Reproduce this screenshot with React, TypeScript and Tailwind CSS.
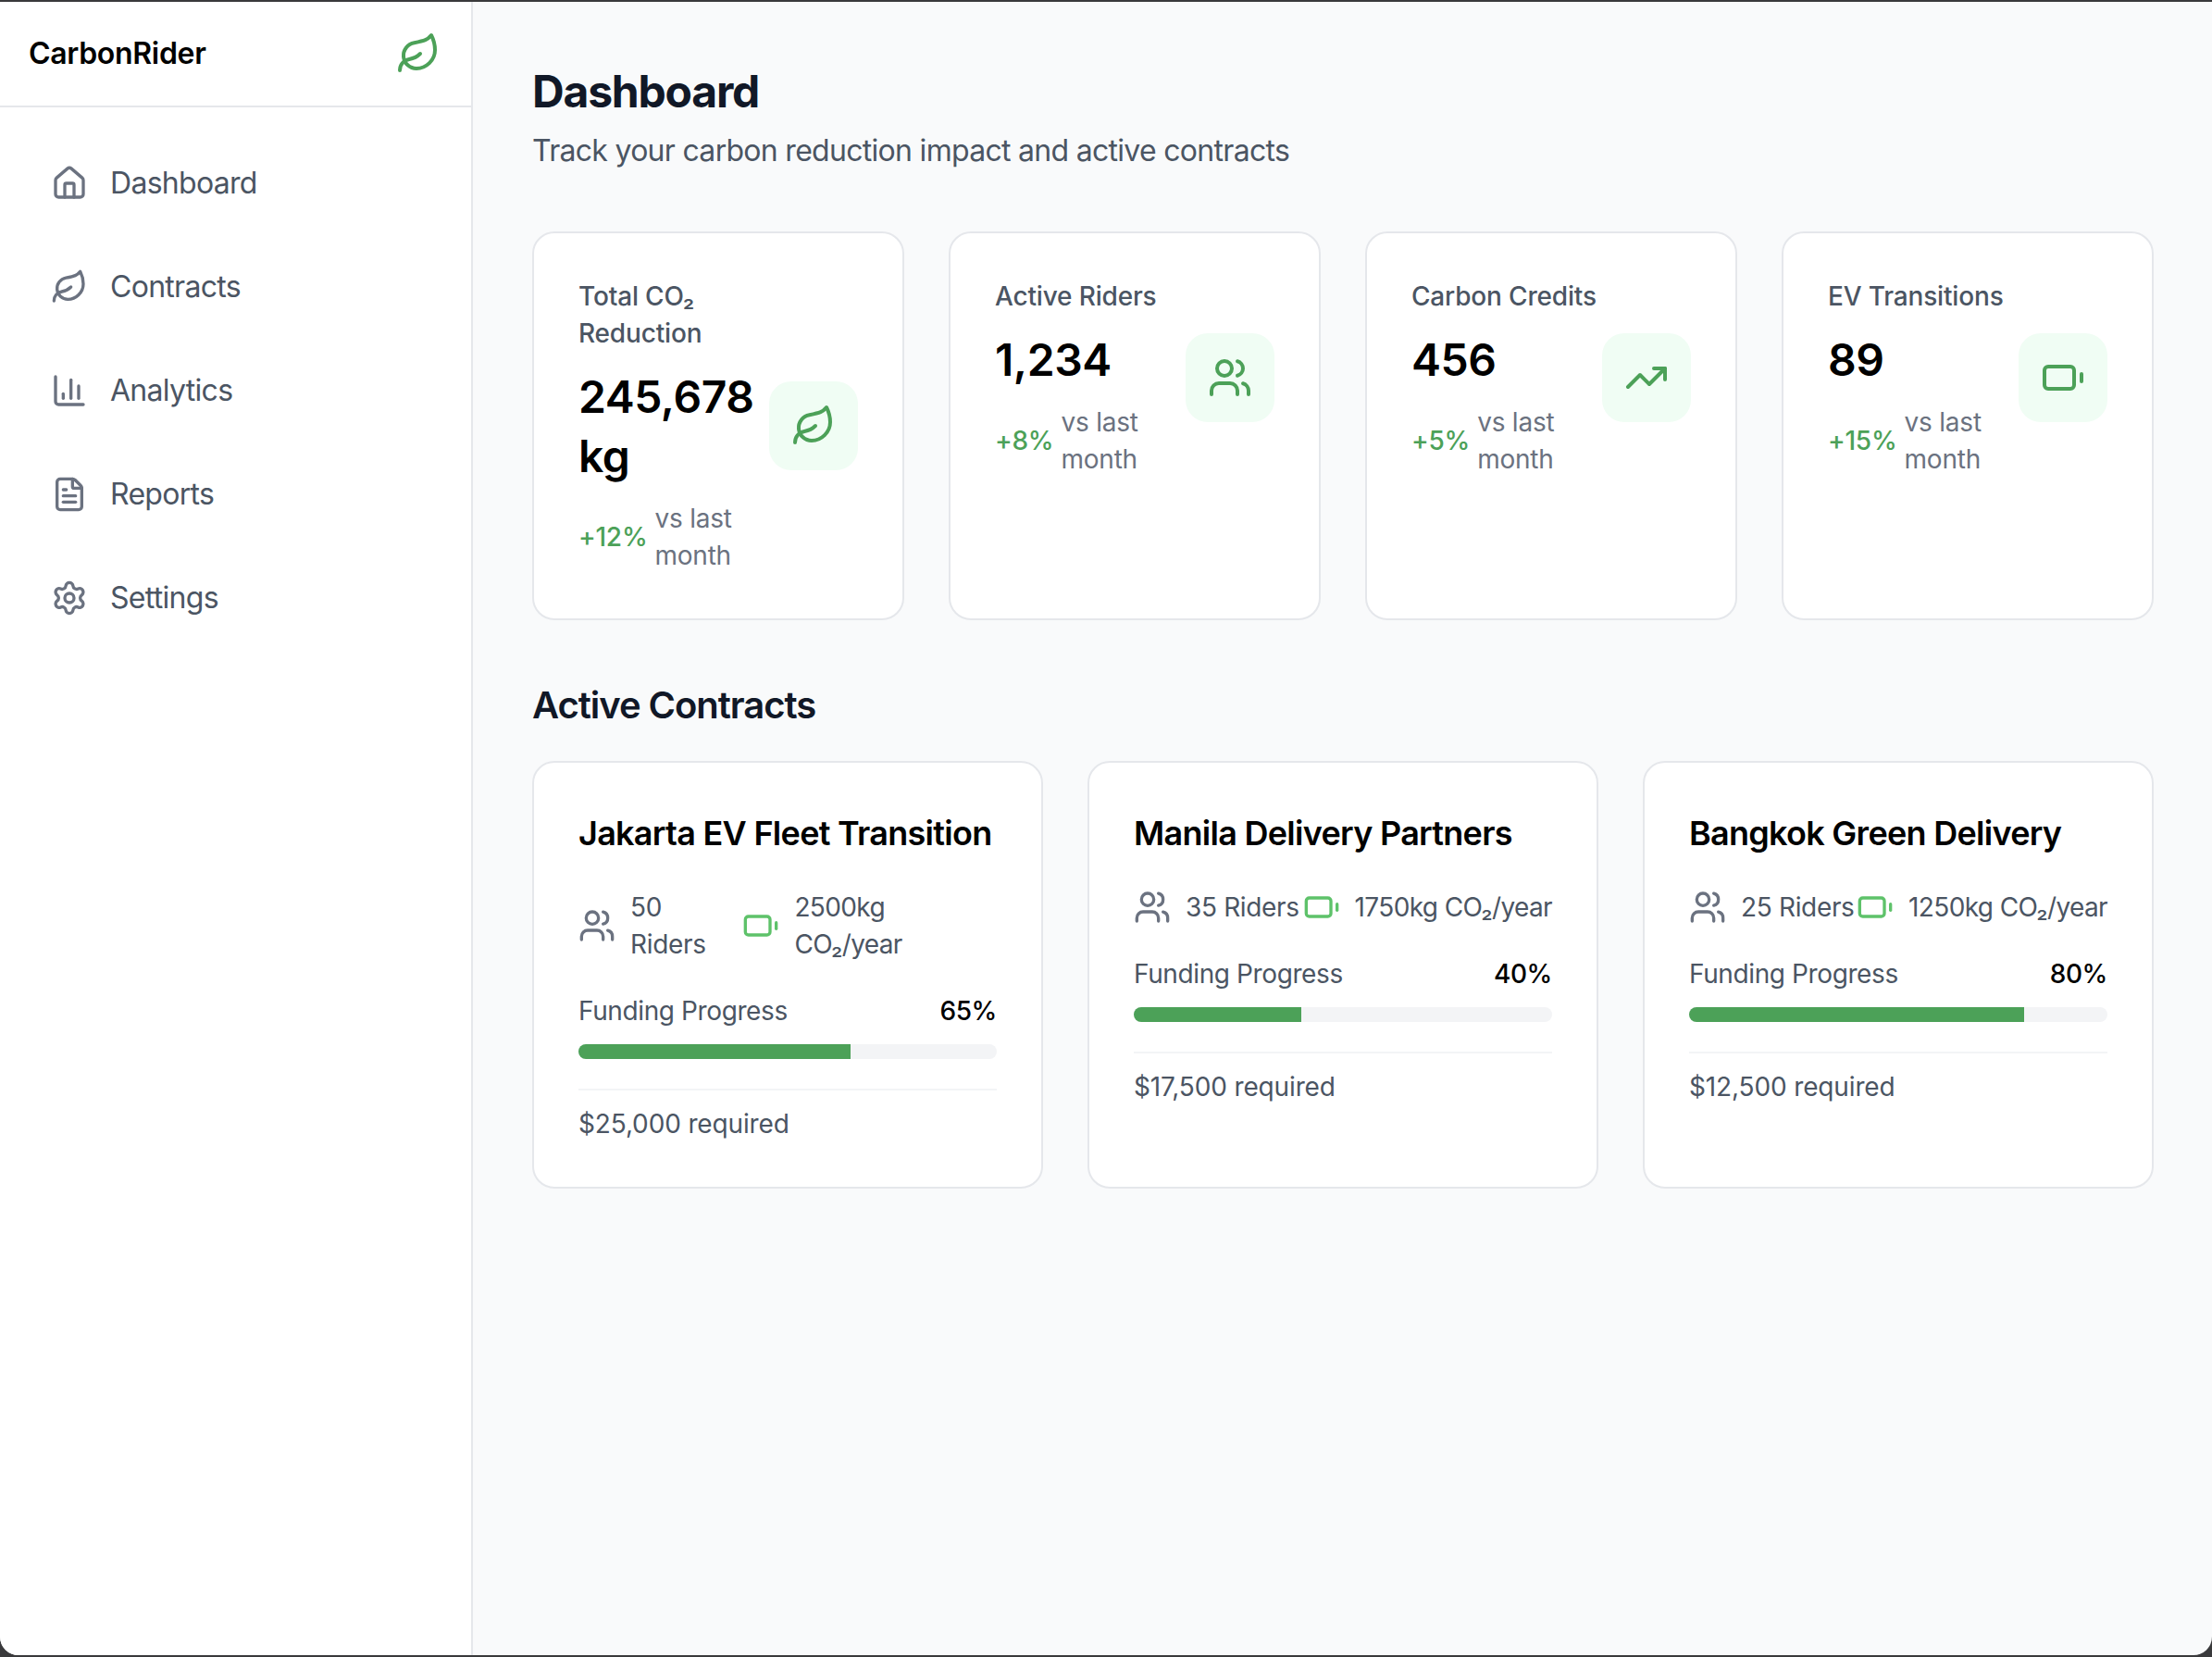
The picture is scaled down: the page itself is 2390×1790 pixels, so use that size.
import React from 'react';
import { House, Leaf, ChartColumn, FileText, Settings, Users, TrendingUp, Battery } from 'lucide-react';

const navItems = [
  { label: 'Dashboard', icon: House },
  { label: 'Contracts', icon: Leaf },
  { label: 'Analytics', icon: ChartColumn },
  { label: 'Reports', icon: FileText },
  { label: 'Settings', icon: Settings },
];

const stats = [
  { label: 'Total CO₂ Reduction', value: '245,678 kg', delta: '+12%', icon: Leaf },
  { label: 'Active Riders', value: '1,234', delta: '+8%', icon: Users },
  { label: 'Carbon Credits', value: '456', delta: '+5%', icon: TrendingUp },
  { label: 'EV Transitions', value: '89', delta: '+15%', icon: Battery },
];

const contracts = [
  { title: 'Jakarta EV Fleet Transition', riders: '50 Riders', co2: '2500kg CO₂/year', progress: 65, required: '$25,000 required' },
  { title: 'Manila Delivery Partners', riders: '35 Riders', co2: '1750kg CO₂/year', progress: 40, required: '$17,500 required' },
  { title: 'Bangkok Green Delivery', riders: '25 Riders', co2: '1250kg CO₂/year', progress: 80, required: '$12,500 required' },
];

export default function App() {
  return (
    <div className="h-[1790px] w-[2390px] overflow-hidden bg-[#3a3a3c] py-[2px] font-['Inter',sans-serif]">
      <div className="flex h-full overflow-hidden rounded-b-[20px] bg-[#f9fafb]">
        <aside className="w-[511px] shrink-0 border-r-2 border-[#e5e7eb] bg-white">
          <div className="flex h-[114px] items-center justify-between border-b-2 border-[#e5e7eb] pr-[33px] pl-[31px]">
            <span className="text-[32px] leading-[48px] font-semibold tracking-[-0.01em] text-black">CarbonRider</span>
            <Leaf size={48} className="text-[#4ca158]" />
          </div>
          <nav className="flex flex-col gap-4 px-[23px] pt-[34px]">
            {navItems.map(({ label, icon: Icon }) => (
              <div key={label} className="flex items-center gap-6 px-8 py-6">
                <Icon size={40} className="text-[#6b7280]" />
                <span className="text-[32px] leading-[48px] tracking-[-0.022em] text-[#4b5563]">{label}</span>
              </div>
            ))}
          </nav>
        </aside>
        <main className="min-w-0 flex-1 pt-[65px] pr-[63px] pl-16">
          <h1 className="text-5xl leading-16 font-bold tracking-[-0.025em] text-[#111827]">Dashboard</h1>
          <p className="mt-2 text-[32px] leading-[48px] tracking-[-0.022em] text-[#4b5563]">Track your carbon reduction impact and active contracts</p>
          <div className="mt-[63px] grid grid-cols-4 gap-12">
            {stats.map(({ label, value, delta, icon: Icon }) => (
              <div key={label} className="rounded-3xl border-2 border-[#e5e7eb] bg-white p-12">
                <div className="flex items-center">
                  <div className="min-w-0 flex-1">
                    <p className="text-[28px] leading-10 font-medium tracking-[-0.006em] text-[#4b5563]">{label}</p>
                    <p className="mt-[17px] text-5xl leading-16 font-semibold tracking-[-0.009em] text-black">{value}</p>
                    <div className="mt-[15px] flex items-center gap-2 text-[28px] leading-10 tracking-[-0.008em]">
                      <span className="font-medium text-[#4ca158]">{delta}</span>
                      <span className="text-[#6b7280]">vs last month</span>
                    </div>
                  </div>
                  <div className="shrink-0 rounded-3xl bg-[#f0fdf4] p-6">
                    <Icon size={48} className="text-[#4ca158]" />
                  </div>
                </div>
              </div>
            ))}
          </div>
          <h2 className="mt-16 text-[40px] leading-14 font-semibold tracking-[-0.026em] text-[#111827]">Active Contracts</h2>
          <div className="mt-8 grid grid-cols-3 gap-12">
            {contracts.map(({ title, riders, co2, progress, required }) => (
              <div key={title} className="rounded-3xl border-2 border-[#e5e7eb] bg-white p-12">
                <h3 className="text-4xl leading-14 font-semibold tracking-[-0.02em] text-black">{title}</h3>
                <div className="mt-8 flex items-center justify-between text-[28px] leading-10 text-[#4b5563]">
                  <div className="flex items-center gap-4">
                    <Users size={40} className="shrink-0 text-[#6b7280]" />
                    <span className="tracking-[-0.012em]">{riders}</span>
                  </div>
                  <div className="flex items-center gap-4">
                    <Battery size={40} className="shrink-0 text-[#5ec26a]" />
                    <span className="tracking-[-0.022em]">{co2}</span>
                  </div>
                </div>
                <div className="mt-8 flex items-center justify-between text-[28px] leading-10 tracking-[-0.014em]">
                  <span className="text-[#4b5563]">Funding Progress</span>
                  <span className="font-medium text-black">{progress}%</span>
                </div>
                <div className="mt-4 h-4 overflow-hidden rounded-full bg-[#f3f4f6]">
                  <div className="h-full bg-[#4ca158]" style={{ width: `${progress}%` }} />
                </div>
                <div className="mt-8 border-t-2 border-[#f3f4f6] pt-4 text-[28px] leading-10 tracking-[-0.005em] text-[#4b5563]">{required}</div>
              </div>
            ))}
          </div>
        </main>
      </div>
    </div>
  );
}
